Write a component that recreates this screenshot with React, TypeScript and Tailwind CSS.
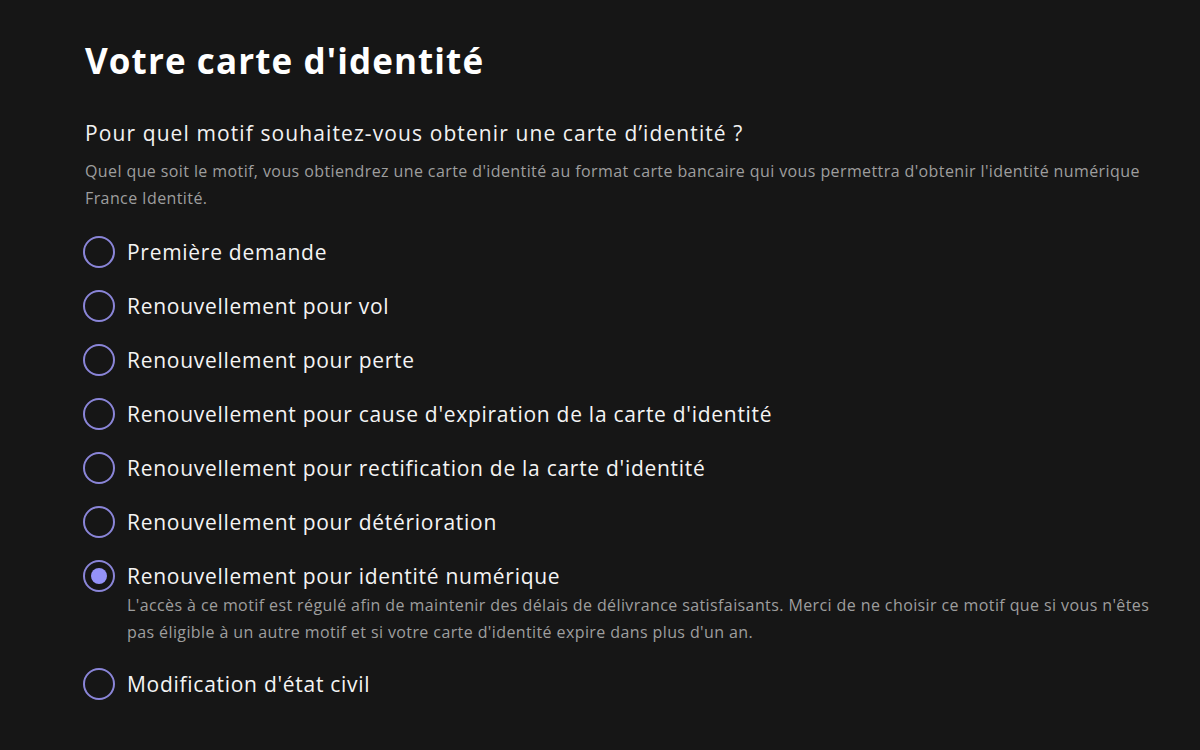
const options = [
    'Première demande',
    'Renouvellement pour vol',
    'Renouvellement pour perte',
    "Renouvellement pour cause d'expiration de la carte d'identité",
    "Renouvellement pour rectification de la carte d'identité",
    'Renouvellement pour détérioration',
    'Renouvellement pour identité numérique',
    "Modification d'état civil",
]

function Radio({ checked }: { checked: boolean }) {
    return (
        <span className="flex h-[32px] w-[32px] shrink-0 items-center justify-center rounded-full border-2 border-[#8a85d8]">
            {checked && <span className="h-[16px] w-[16px] rounded-full bg-[#9492f8]"></span>}
        </span>
    )
}

export default function App() {
    const selected = 6
    return (
        <div className="min-h-[750px] w-full bg-[#161616] px-[85px] pt-[39px] font-['Open_Sans',sans-serif] text-white">
            <h1 className="text-[35px] font-bold leading-[44px] tracking-[1.1px] text-white">Votre carte d'identité</h1>
            <h2 className="mt-[35px] text-[21px] leading-[30px] tracking-[1.1px] text-[#f2f2f2]">
                Pour quel motif souhaitez-vous obtenir une carte d’identité ?
            </h2>
            <p className="mt-[10px] w-[1065px] text-[16px] leading-[27px] tracking-[0.4px] text-[#9e9e9e]">
                Quel que soit le motif, vous obtiendrez une carte d'identité au format carte bancaire qui vous permettra
                d'obtenir l'identité numérique France Identité.
            </p>
            <div className="ml-[-2px] mt-[24px] flex flex-col gap-[22px]">
                {options.map((label, i) => (
                    <div key={label}>
                        <div className="flex items-center gap-[12px]">
                            <Radio checked={i === selected} />
                            <span className="text-[21px] font-medium leading-[32px] tracking-[0.72px] text-[#f4f4f4]">
                                {label}
                            </span>
                        </div>
                        {i === selected && (
                            <p className="ml-[44px] w-[1042px] text-[16px] leading-[27px] tracking-[0.4px] text-[#9e9e9e]">
                                L'accès à ce motif est régulé afin de maintenir des délais de délivrance satisfaisants.
                                Merci de ne choisir ce motif que si vous n'êtes pas éligible à un autre motif et si votre
                                carte d'identité expire dans plus d'un an.
                            </p>
                        )}
                    </div>
                ))}
            </div>
        </div>
    )
}
